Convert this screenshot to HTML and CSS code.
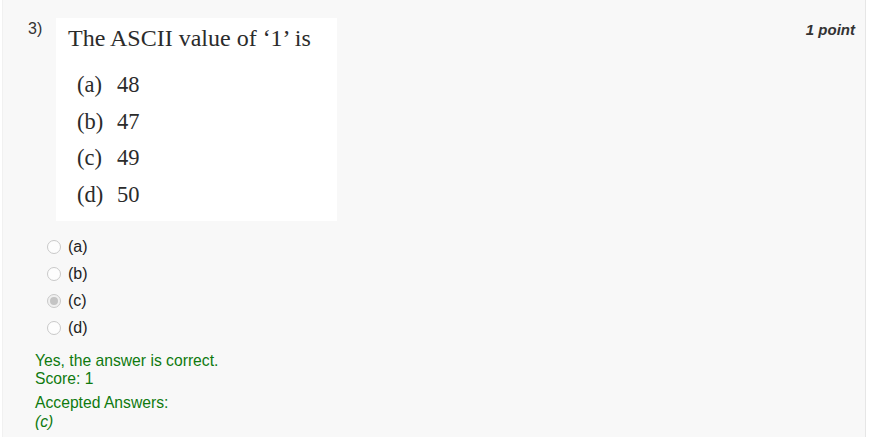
FILE: index.html
```html
<!DOCTYPE html>
<html>
<head>
<meta charset="utf-8">
<link rel="stylesheet" href="styles.css">
</head>
<body>
<div class="panel">
  <div class="head">
    <div class="num">3)</div>
    <div class="qimg">
      <div class="qtitle">The ASCII value of ‘1’ is</div>
      <div class="qopts">
        <div class="qopt"><span class="lbl">(a)</span>48</div>
        <div class="qopt"><span class="lbl">(b)</span>47</div>
        <div class="qopt"><span class="lbl">(c)</span>49</div>
        <div class="qopt"><span class="lbl">(d)</span>50</div>
      </div>
    </div>
    <div class="points">1 point</div>
  </div>
  <div class="choices">
    <div class="choice"><span class="radio"></span><span class="ctext">(a)</span></div>
    <div class="choice"><span class="radio"></span><span class="ctext">(b)</span></div>
    <div class="choice"><span class="radio checked"></span><span class="ctext">(c)</span></div>
    <div class="choice"><span class="radio"></span><span class="ctext">(d)</span></div>
  </div>
  <div class="feedback">
    <div class="fline">Yes, the answer is correct.</div>
    <div class="fline">Score: 1</div>
    <div class="fline accepted">Accepted Answers:</div>
    <div class="fline ans">(c)</div>
  </div>
</div>
</body>
</html>
```
FILE: styles.css
```css
html, body {
  margin: 0;
  padding: 0;
  background: #ffffff;
}
body {
  font-family: "Liberation Sans", Arial, sans-serif;
  height: 437px;
  overflow: hidden;
}
.panel {
  margin-left: 2px;
  width: 864px;
  height: 437px;
  box-sizing: border-box;
  background: #f8f8f8;
  border-left: 1px solid #f1f1f1;
  border-right: 1px solid #e6e6e6;
  padding: 18px 10px 0 25px;
}
.head {
  display: flex;
  align-items: flex-start;
}
.num {
  width: 28px;
  font-size: 16px;
  line-height: 18px;
  color: #333;
  padding-top: 2px;
}
.qimg {
  width: 281px;
  height: 203px;
  background: #ffffff;
  box-sizing: border-box;
  padding: 6px 0 0 12px;
  font-family: "Liberation Serif", "Times New Roman", serif;
  color: #2b2b2b;
}
.qtitle {
  font-size: 24px;
  line-height: 28px;
}
.qopts {
  margin-top: 15px;
  padding-left: 9px;
}
.qopt {
  font-size: 22.5px;
  line-height: 36.7px;
}
.qopt .lbl {
  display: inline-block;
  width: 40px;
}
.points {
  margin-left: auto;
  font-size: 15px;
  line-height: 17px;
  font-weight: bold;
  font-style: italic;
  color: #333;
  padding-top: 3px;
}
.choices {
  margin-top: 12px;
  padding-left: 19px;
  display: flex;
  flex-direction: column;
}
.choice {
  display: flex;
  align-items: center;
  height: 27px;
  gap: 7px;
}
.radio {
  width: 12px;
  height: 12px;
  border-radius: 50%;
  border: 1px solid #c9c9c9;
  background: #fdfdfd;
  position: relative;
}
.radio.checked {
  background: #f0f0f0;
}
.radio.checked::after {
  content: "";
  position: absolute;
  left: 2px;
  top: 2px;
  width: 8px;
  height: 8px;
  border-radius: 50%;
  background: #c4c4c4;
}
.ctext {
  font-size: 16px;
  color: #222;
}
.feedback {
  margin-top: 11px;
  padding-left: 7px;
  color: #0f7a0f;
  font-size: 15.7px;
}
.fline {
  line-height: 18px;
}
.accepted {
  margin-top: 6px;
}
.ans {
  font-style: italic;
  line-height: 20px;
}
```
